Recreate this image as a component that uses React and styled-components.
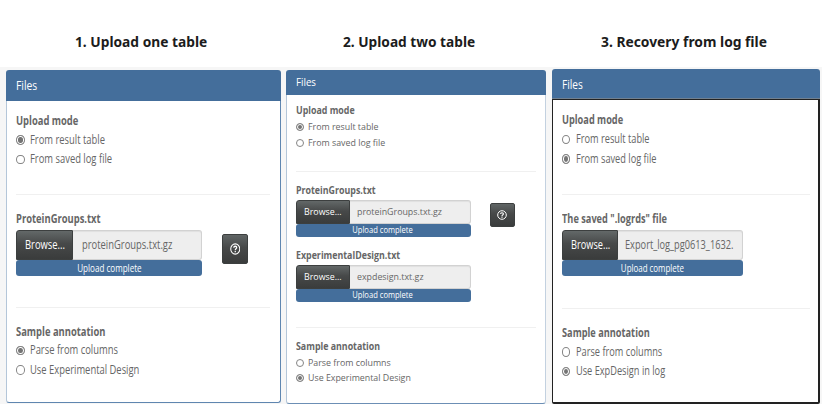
import React from "react";
import styled, { createGlobalStyle, ThemeProvider } from "styled-components";

const GlobalStyle = createGlobalStyle`
  * { box-sizing: border-box; }
  body { margin: 0; background: #fff; overflow: hidden; }
`;

const Page = styled.main`
  width: 822px;
  height: 404px;
  overflow: hidden;
  display: flex;
  flex-direction: column;
  font-family: "Open Sans", "Noto Sans", sans-serif;
  color: #666;
`;

const Titles = styled.header`
  height: 67px;
  flex: none;
  display: grid;
  grid-template-columns: 281px 257px 1fr;
  padding-top: 32px;
`;

const Title = styled.h2`
  margin: 0;
  padding-left: ${(p) => p.$indent}px;
  font: 700 13.3px/20px "Noto Sans", "Open Sans", sans-serif;
  color: #1c1c1c;
  white-space: nowrap;
`;

const TitleText = styled.span`
  display: inline-block;
  transform-origin: 0 50%;
  transform: scaleX(${(p) => p.$k});
`;

const Board = styled.section`
  flex: 1;
  display: flex;
  align-items: flex-start;
  background: #f6f6f6;
  padding-left: 6px;
`;

const Panel = styled.article`
  width: ${(p) => p.theme.width}px;
  height: ${(p) => p.theme.height}px;
  margin: ${(p) => p.theme.top}px ${(p) => p.theme.gap}px 0 0;
  flex: none;
  display: flex;
  flex-direction: column;
`;

const PanelHead = styled.div`
  height: ${(p) => p.theme.head}px;
  flex: none;
  display: flex;
  align-items: center;
  padding: 0 0 ${(p) => (p.theme.focused ? 0 : 1)}px ${(p) => p.theme.pad}px;
  background: #446e9b;
  border-radius: 3px 3px 0 0;
  color: #fff;
  border-bottom: ${(p) => (p.theme.focused ? "1px solid #71808f" : "0")};
`;

const PanelBody = styled.div`
  flex: 1;
  background: #fff;
  border-style: solid;
  border-width: ${(p) => p.theme.border};
  border-color: ${(p) => p.theme.borderColor};
  border-radius: ${(p) => (p.theme.focused ? "0 0 2px 2px" : "0 0 3px 3px")};
  padding-left: ${(p) => p.theme.pad - p.theme.inset}px;
`;

const Text = styled.span`
  display: inline-block;
  flex: none;
  white-space: nowrap;
  font-size: ${(p) => p.theme.font * (p.$size || 1)}px;
  line-height: 16px;
  transform-origin: ${(p) => (p.$center ? "50%" : "0")} 50%;
  transform: scaleX(${(p) => p.theme.k * (p.$k || 1)});
`;

const Label = styled(Text)`
  display: block;
  width: max-content;
  font-weight: 700;
  margin-top: ${(p) => p.$mt}px;
`;

const RadioRow = styled.div`
  height: ${(p) => p.theme.pitch}px;
  display: flex;
  align-items: center;
  gap: ${(p) => p.theme.radioGap}px;
`;

const Dot = styled.span`
  width: ${(p) => p.theme.dotW}px;
  height: ${(p) => p.theme.dotH}px;
  flex: none;
  border: 1px solid #858585;
  border-radius: 50%;
  background: ${(p) => (p.$on ? "#747474" : "#fff")};
  box-shadow: inset 0 0 0 1px #fff;
`;

const RadioList = styled.div`
  margin-top: ${(p) => p.theme.radioTop}px;
`;

const Rule = styled.hr`
  width: ${(p) => p.theme.rule}px;
  height: 1px;
  border: 0;
  margin: ${(p) => p.$mt}px 0 0;
  background: #f0f0f0;
`;

const Upload = styled.div`
  display: flex;
  align-items: flex-start;
  margin-top: ${(p) => p.$mt}px;
`;

const UploadField = styled.div`
  width: ${(p) => p.theme.field}px;
  flex: none;
`;

const FileRow = styled.div`
  display: flex;
  height: ${(p) => p.theme.fieldH}px;
`;

const Browse = styled.div`
  width: ${(p) => p.theme.browse}px;
  flex: none;
  display: flex;
  align-items: center;
  padding-left: ${(p) => p.theme.browsePad}px;
  background: linear-gradient(#636868, #474949 45%, #3a3c3c);
  border: 1px solid #3c3f3f;
  border-radius: 3px 0 0 0;
  color: #fff;
`;

const FileName = styled.div`
  flex: 1;
  min-width: 0;
  display: flex;
  align-items: center;
  padding-left: ${(p) => p.theme.namePad}px;
  background: #eee;
  border: 1px solid #d2d2d2;
  border-left: 0;
  border-radius: 0 3px 3px 0;
  box-shadow: inset 0 1px 1px rgba(0, 0, 0, 0.06);
`;

const Progress = styled.div`
  height: ${(p) => p.theme.barH}px;
  display: flex;
  align-items: center;
  justify-content: center;
  background: #446e9b;
  border-radius: 3px;
  color: #fff;
`;

const HelpButton = styled.button`
  width: ${(p) => p.theme.helpW}px;
  height: ${(p) => p.theme.helpH}px;
  margin: ${(p) => p.theme.helpTop}px 0 0 ${(p) => p.theme.helpLeft}px;
  padding: 0;
  display: grid;
  place-items: center;
  border: 1px solid #3c3f3f;
  border-radius: 2px;
  background: linear-gradient(#606565, #474949 45%, #3a3c3c);
  color: #fff;
`;

function HelpIcon({ w, h }) {
  return (
    <svg width={w} height={h} viewBox="0 0 20 20" preserveAspectRatio="none" fill="none" stroke="currentColor">
      <circle cx="10" cy="10" r="8.6" strokeWidth="2" />
      <path d="M7.2 8 Q7.2 5.4 10 5.4 Q12.8 5.4 12.8 7.7 Q12.8 9 11.3 9.8 Q10 10.5 10 12" strokeWidth="2.3" />
      <path d="M10 13.2v2.2" strokeWidth="2.4" />
    </svg>
  );
}

function Radios({ items, selected }) {
  return (
    <RadioList>
      {items.map((item, i) => (
        <RadioRow key={item}>
          <Dot $on={i === selected} />
          <Text>{item}</Text>
        </RadioRow>
      ))}
    </RadioList>
  );
}

const base = {
  font: 12.1, k: 0.777, pitch: 19.5, radioTop: 1, radioGap: 5.5,
  dotW: 8.5, dotH: 9.5, pad: 10, inset: 1, fieldH: 30, barH: 16,
};

const panels = [
  {
    theme: {
      ...base, width: 275, height: 333, top: 3, gap: 5, head: 31,
      border: "0 1px 1px 1px", borderColor: "#dfe6ee #5f86b0 #5f86b0 #b4c6d9",
      rule: 254, field: 186, browse: 57, browsePad: 8, namePad: 8.5,
      helpW: 26, helpH: 30, helpTop: 4, helpLeft: 20, helpIcon: [10.5, 12],
    },
    mode: 0, modeTop: 12, ruleTop: 25,
    files: [{ label: "ProteinGroups.txt", name: "proteinGroups.txt.gz", lt: 16, ut: 3, help: true }],
    rule2: 30.5, annTop: 16, annotation: 0, options: ["Parse from columns", "Use Experimental Design"],
  },
  {
    theme: {
      ...base, font: 9.8, k: 0.902, pitch: 15.7, radioTop: 0, radioGap: 4.5, dotW: 8, dotH: 8,
      width: 260, height: 333.5, top: 3, gap: 5.5, head: 25, pad: 9.5, fieldH: 24, barH: 13,
      border: "0 1px 1px 1px", borderColor: "#dfe6ee #c3d1e0 #6c8fb5 #b4c6d9",
      rule: 240, field: 175, browse: 54, browsePad: 7.5, namePad: 7.5,
      helpW: 25, helpH: 24, helpTop: 3, helpLeft: 19, helpIcon: [10, 10],
    },
    mode: 0, modeTop: 8, ruleTop: 21,
    files: [
      { label: "ProteinGroups.txt", name: "proteinGroups.txt.gz", lt: 10.5, ut: 1, help: true },
      { label: "ExperimentalDesign.txt", name: "expdesign.txt.gz", lt: 11, ut: 1 },
    ],
    rule2: 25, annTop: 11, annotation: 1, options: ["Parse from columns", "Use Experimental Design"],
  },
  {
    theme: {
      ...base, k: 0.762, radioTop: 1.5, focused: true, width: 268.5, height: 335, top: 2, gap: 0, head: 30,
      border: "1px 2px 2px 1px", borderColor: "#222",
      rule: 248, field: 181.5, browse: 56, browsePad: 8, namePad: 7.5,
    },
    mode: 1, modeTop: 12, ruleTop: 25,
    files: [{ label: 'The saved ".logrds" file', name: "Export_log_pg0613_1632.", lt: 16, ut: 3.5 }],
    rule2: 32, annTop: 15.5, annotation: 1, options: ["Parse from columns", "Use ExpDesign in log"],
  },
];

function FilePanel({ panel }) {
  const [iw, ih] = panel.theme.helpIcon || [];
  return (
    <ThemeProvider theme={panel.theme}>
      <Panel>
        <PanelHead><Text $size={1.1}>Files</Text></PanelHead>
        <PanelBody>
          <Label $mt={panel.modeTop}>Upload mode</Label>
          <Radios items={["From result table", "From saved log file"]} selected={panel.mode} />
          <Rule $mt={panel.ruleTop} />
          {panel.files.map((file) => (
            <React.Fragment key={file.label}>
              <Label $mt={file.lt}>{file.label}</Label>
              <Upload $mt={file.ut}>
                <UploadField>
                  <FileRow>
                    <Browse><Text>Browse...</Text></Browse>
                    <FileName><Text>{file.name}</Text></FileName>
                  </FileRow>
                  <Progress><Text $center $size={0.86}>Upload complete</Text></Progress>
                </UploadField>
                {file.help && <HelpButton aria-label="Help"><HelpIcon w={iw} h={ih} /></HelpButton>}
              </Upload>
            </React.Fragment>
          ))}
          <Rule $mt={panel.rule2} />
          <Label $mt={panel.annTop}>Sample annotation</Label>
          <Radios items={panel.options} selected={panel.annotation} />
        </PanelBody>
      </Panel>
    </ThemeProvider>
  );
}

export default function App() {
  return (
    <Page>
      <GlobalStyle />
      <Titles>
        <Title $indent={75}><TitleText $k={1.035}>1. Upload one table</TitleText></Title>
        <Title $indent={62}><TitleText $k={1.03}>2. Upload two table</TitleText></Title>
        <Title $indent={63}><TitleText $k={1.04}>3. Recovery from log file</TitleText></Title>
      </Titles>
      <Board>
        {panels.map((panel, i) => <FilePanel key={i} panel={panel} />)}
      </Board>
    </Page>
  );
}
